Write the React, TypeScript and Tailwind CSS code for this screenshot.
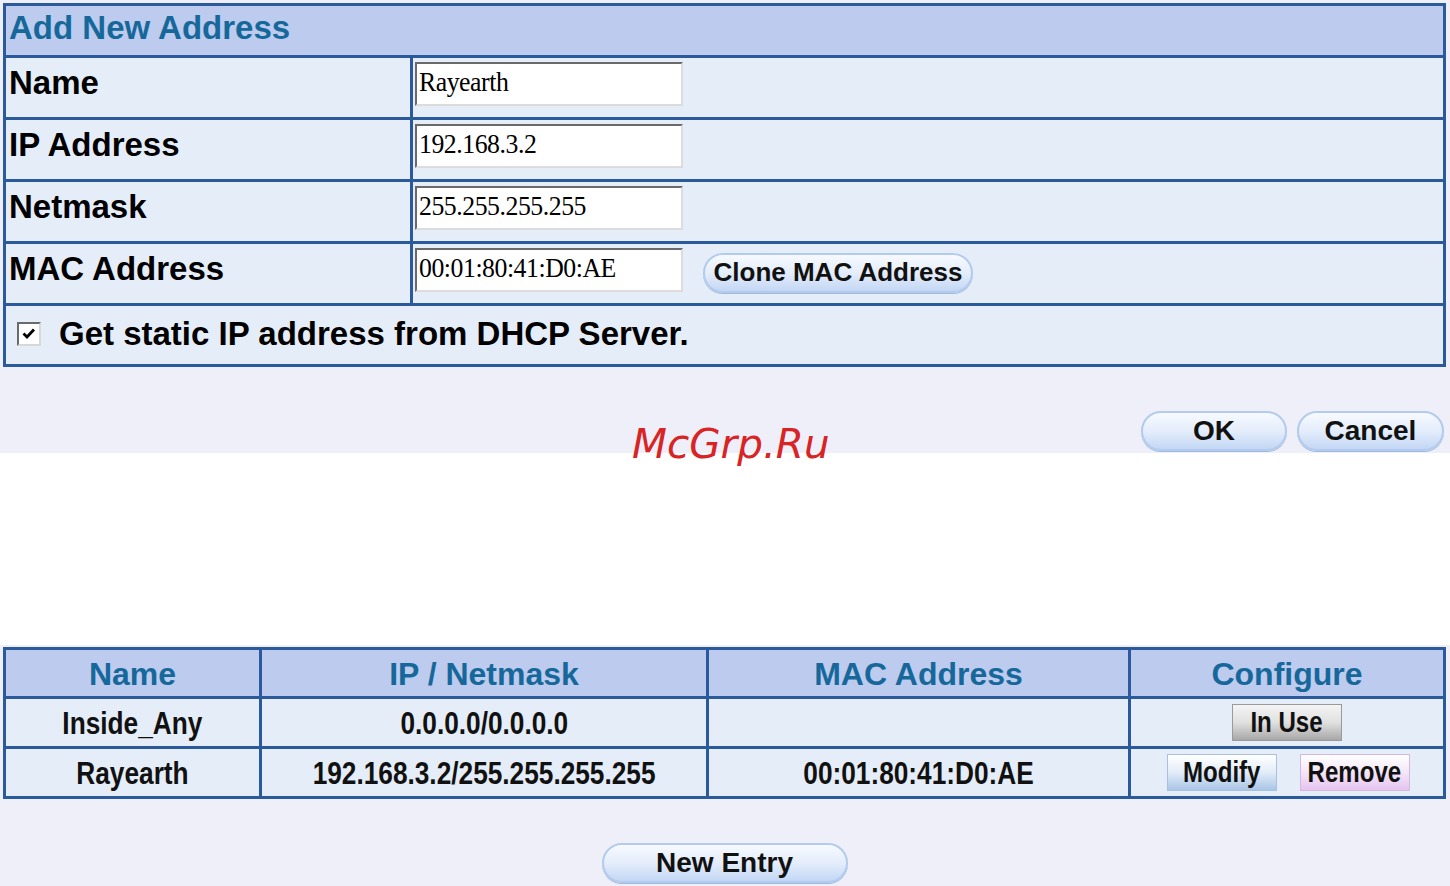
import React from "react";

const B = "#2b5a9c";

function Input({ value }: { value: string }) {
  return (
    <div className="ml-[2px] w-[268px] h-[44px] bg-white border-2 border-t-[#6a6a6a] border-l-[#6a6a6a] border-r-[#dcdcdc] border-b-[#dcdcdc] flex items-center pl-[2px] pb-[4px] overflow-hidden">
      <span
        className="inline-block origin-left scale-x-[0.92] whitespace-nowrap text-[28px] leading-none text-black tracking-[-0.5px]"
        style={{ fontFamily: '"Liberation Serif", "Times New Roman", serif' }}
      >
        {value}
      </span>
    </div>
  );
}

function Pill({ children, w, text = "text-[28px]" }: { children: React.ReactNode; w: string; text?: string }) {
  return (
    <div
      className={`${w} h-[40px] rounded-full border-2 border-[#b3cbec] bg-gradient-to-b from-[#f7faff] via-[#e4edfb] to-[#c3d7f4] flex items-center justify-center font-bold text-[#111] ${text} shadow-[0_1px_0_#9fb9e0]`}
    >
      {children}
    </div>
  );
}

function Label({ children }: { children: React.ReactNode }) {
  return (
    <div className="bg-[#e5edf8] flex items-center pl-[3px] pb-[10px] text-[33px] font-bold text-black">{children}</div>
  );
}

function Row({ label, value, extra }: { label: string; value: string; extra?: React.ReactNode }) {
  return (
    <>
      <Label>{label}</Label>
      <div className="bg-[#e5edf8] flex items-center pb-[8px]">
        <Input value={value} />
        {extra}
      </div>
    </>
  );
}

function Cell({ children }: { children?: React.ReactNode }) {
  return (
    <div className="bg-[#e5edf8] flex items-center justify-center text-[32px] font-bold text-[#111]">
      {children ? <span className="inline-block scale-x-[0.82] whitespace-nowrap">{children}</span> : null}
    </div>
  );
}

function SmallBtn({ children, cls }: { children: React.ReactNode; cls: string }) {
  return (
    <div
      className={`w-[110px] h-[37px] flex items-center justify-center font-bold text-[29px] text-[#111] border ${cls}`}
    >
      <span className="inline-block scale-x-[0.83] whitespace-nowrap">{children}</span>
    </div>
  );
}

export default function App() {
  return (
    <div
      className="w-[1450px] h-[886px] bg-white relative overflow-hidden"
      style={{ fontFamily: '"Liberation Sans", Arial, sans-serif' }}
    >
      {/* Top section */}
      <div className="bg-[#eeeff8] h-[453px] pt-[3px] pl-[3px] pr-[4px]">
        <div
          className="border-[3px] grid grid-cols-[404px_1fr] gap-[3px] grid-rows-[49px_59px_59px_59px_59px_58px]"
          style={{ borderColor: B, backgroundColor: B }}
        >
          <div className="col-span-2 bg-[#bccbee] flex items-center pl-[3px] pb-[6px] text-[33px] font-bold text-[#16689a]">
            Add New Address
          </div>
          <Row label="Name" value="Rayearth" />
          <Row label="IP Address" value="192.168.3.2" />
          <Row label="Netmask" value="255.255.255.255" />
          <Row
            label="MAC Address"
            value="00:01:80:41:D0:AE"
            extra={
              <div className="ml-[20px] mt-[6px]">
                <Pill w="w-[270px]" text="text-[26px]">Clone MAC Address</Pill>
              </div>
            }
          />
          <div className="col-span-2 bg-[#e5edf8] flex items-center pl-[11px] pb-[2px]">
            <div className="w-[24px] h-[24px] bg-white border-2 border-t-[#6a6a6a] border-l-[#6a6a6a] border-r-[#d8d8d8] border-b-[#d8d8d8] flex items-center justify-center">
              <svg width="16" height="16" viewBox="0 0 16 16">
                <path d="M2.5 7.5 L6 11 L13 3.5" fill="none" stroke="#000" strokeWidth="2.8" />
              </svg>
            </div>
            <span className="ml-[18px] text-[33px] font-bold text-black">Get static IP address from DHCP Server.</span>
          </div>
        </div>
        <div className="flex justify-end gap-[10px] mt-[44px] pr-[2px]">
          <Pill w="w-[146px]">OK</Pill>
          <Pill w="w-[147px]">Cancel</Pill>
        </div>
      </div>

      <div className="h-[192px] bg-white" />

      {/* Bottom section */}
      <div className="bg-[#eeeff8] h-[241px] pt-[2px] pl-[3px] pr-[4px]">
        <div
          className="border-[3px] grid grid-cols-[253px_444px_419px_1fr] grid-rows-[46px_47px_47px] gap-[3px]"
          style={{ borderColor: B, backgroundColor: B }}
        >
          {["Name", "IP / Netmask", "MAC Address", "Configure"].map((h) => (
            <div key={h} className="bg-[#bccbee] flex items-center justify-center text-[32px] font-bold text-[#16689a] pt-[2px]">
              {h}
            </div>
          ))}
          <Cell>Inside_Any</Cell>
          <Cell>0.0.0.0/0.0.0.0</Cell>
          <Cell />
          <div className="bg-[#e5edf8] flex items-center justify-center">
            <SmallBtn cls="bg-gradient-to-b from-[#f4f4f4] via-[#e0e0e0] to-[#a8a8a8] border-[#9a9a9a]">In Use</SmallBtn>
          </div>
          <Cell>Rayearth</Cell>
          <Cell>192.168.3.2/255.255.255.255</Cell>
          <Cell>00:01:80:41:D0:AE</Cell>
          <div className="bg-[#e5edf8] flex items-center justify-center gap-[23px] pl-[2px]">
            <SmallBtn cls="bg-gradient-to-b from-[#ffffff] via-[#e3ecf8] to-[#a9c4e6] border-[#a9c0de]">Modify</SmallBtn>
            <SmallBtn cls="bg-gradient-to-b from-[#ffffff] via-[#f3e6f8] to-[#e6c4f0] border-[#d4b8de]">Remove</SmallBtn>
          </div>
        </div>
        <div className="flex justify-center mt-[44px]">
          <Pill w="w-[246px]">New Entry</Pill>
        </div>
      </div>

      {/* Watermark */}
      <div
        className="absolute left-[632px] top-[424px] text-[40.5px] italic leading-none text-[#d82424]"
        style={{ fontFamily: '"DejaVu Sans", sans-serif' }}
      >
        McGrp.Ru
      </div>
    </div>
  );
}
